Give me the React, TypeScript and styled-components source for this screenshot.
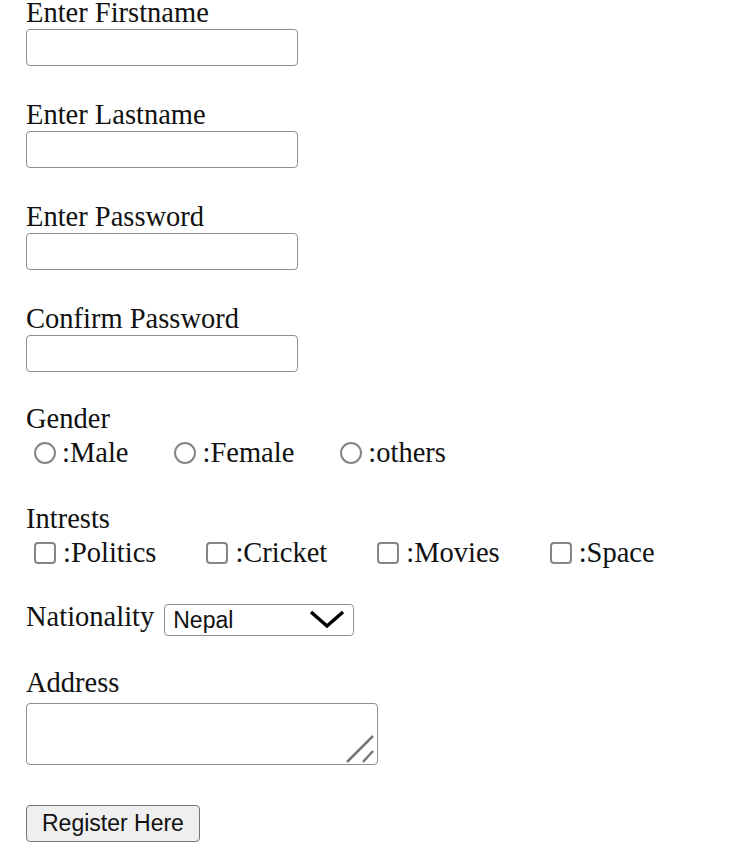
import styled, { createGlobalStyle } from "styled-components";

const GlobalStyle = createGlobalStyle`
    body {
        margin: 0;
        background: #ffffff;
        color: #111111;
        font-family: "Liberation Serif", "Times New Roman", serif;
        font-size: 28.5px;
    }
`

const Form = styled.form`
    display: flex;
    flex-direction: column;
    align-items: flex-start;
    padding-left: 26px;`

const Section = styled.div<{ $top: number }>`
    display: flex;
    flex-direction: column;
    align-items: flex-start;
    margin-top: ${p => p.$top}px;`

const Label = styled.label`
    display: block;
    line-height: 26px;
    white-space: nowrap;`

const TextInput = styled.input`
    box-sizing: border-box;
    width: 272px;
    height: 37px;
    margin: 3px 0 0;
    padding: 2px 4px;
    border: 1px solid #8d8d8d;
    border-radius: 4px;
    background: #fff;
    font-family: "Liberation Sans", Arial, sans-serif;
    font-size: 23px;`

const ChoiceRow = styled.div<{ $gap: number }>`
    display: flex;
    align-items: center;
    gap: ${p => p.$gap}px;
    height: 36px;
    margin-top: 3px;
    padding-left: 8px;
    line-height: 36px;
    white-space: nowrap;`

const Choice = styled.label`
    display: flex;
    align-items: center;`

const Radio = styled.input.attrs({ type: "radio" })`
    appearance: none;
    box-sizing: border-box;
    width: 22px;
    height: 22px;
    margin: 0 6px 0 0;
    border: 2px solid #858585;
    border-radius: 50%;
    background: #fff;`

const Check = styled.input.attrs({ type: "checkbox" })`
    appearance: none;
    box-sizing: border-box;
    width: 22px;
    height: 22px;
    margin: 0 7px 0 0;
    border: 2px solid #858585;
    border-radius: 4px;
    background: #fff;`

const InlineRow = styled.div`
    display: flex;
    align-items: flex-start;`

const SelectWrap = styled.div`
    position: relative;
    margin-top: -1px;
    margin-left: 10px;`

const Select = styled.select`
    appearance: none;
    box-sizing: border-box;
    width: 190px;
    height: 32px;
    padding: 0 0 0 8px;
    border: 1px solid #8d8d8d;
    border-radius: 4px;
    background: #fff;
    color: #111;
    font-family: "Liberation Sans", Arial, sans-serif;
    font-size: 23px;`

const Chevron = styled.svg`
    position: absolute;
    left: 144px;
    top: 6px;
    pointer-events: none;`

const AreaWrap = styled.div`
    position: relative;
    margin-top: 7px;`

const Area = styled.textarea`
    display: block;
    box-sizing: border-box;
    width: 352px;
    height: 62px;
    border: 1px solid #8d8d8d;
    border-radius: 4px;
    resize: none;`

const Grip = styled.svg`
    position: absolute;
    left: 318px;
    top: 29px;
    pointer-events: none;`

const Button = styled.button`
    box-sizing: border-box;
    height: 37px;
    padding: 0 15px;
    border: 1px solid #767676;
    border-radius: 4px;
    background: #efefef;
    color: #111;
    font-family: "Liberation Sans", Arial, sans-serif;
    font-size: 23px;`

const fields = ["Enter Firstname", "Enter Lastname", "Enter Password", "Confirm Password"]

export default function App() {
    return (
        <>
            <GlobalStyle/>
            <Form onSubmit={e => e.preventDefault()}>
                {fields.map((f, i) => (
                    <Section key={f} $top={i === 0 ? 0 : 36}>
                        <Label>{f}</Label>
                        <TextInput type={i > 1 ? "password" : "text"}/>
                    </Section>
                ))}
                <Section $top={34}>
                    <Label>Gender</Label>
                    <ChoiceRow $gap={46}>
                        {["Male", "Female", "others"].map(g => (
                            <Choice key={g}><Radio name="gender"/>:{g}</Choice>
                        ))}
                    </ChoiceRow>
                </Section>
                <Section $top={35}>
                    <Label>Intrests</Label>
                    <ChoiceRow $gap={50}>
                        {["Politics", "Cricket", "Movies", "Space"].map(c => (
                            <Choice key={c}><Check/>:{c}</Choice>
                        ))}
                    </ChoiceRow>
                </Section>
                <Section $top={33}>
                    <InlineRow>
                        <Label>Nationality</Label>
                        <SelectWrap>
                            <Select defaultValue="Nepal">
                                <option>Nepal</option>
                                <option>India</option>
                                <option>China</option>
                            </Select>
                            <Chevron width="38" height="20" viewBox="0 0 38 20">
                                <polyline points="3,3 19,17 35,3" fill="none" stroke="#000" strokeWidth="3.5"/>
                            </Chevron>
                        </SelectWrap>
                    </InlineRow>
                </Section>
                <Section $top={34}>
                    <Label>Address</Label>
                    <AreaWrap>
                        <Area/>
                        <Grip width="32" height="32" viewBox="0 0 32 32">
                            <line x1="3" y1="30" x2="29" y2="4" stroke="#777" strokeWidth="2.5"/>
                            <line x1="19" y1="30" x2="29" y2="19" stroke="#777" strokeWidth="2.5"/>
                        </Grip>
                    </AreaWrap>
                </Section>
                <Section $top={40}>
                    <Button type="submit">Register Here</Button>
                </Section>
            </Form>
        </>
    );
}
